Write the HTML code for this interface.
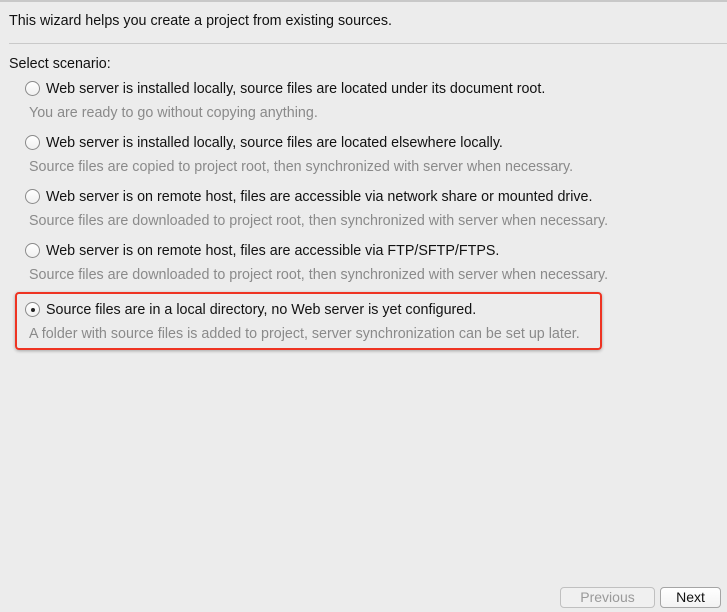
<!DOCTYPE html>
<html><head><style>
body{margin:0;width:727px;height:612px;background:#ececec;font-family:"Liberation Sans",sans-serif;font-size:14.3px;color:#111;position:relative;overflow:hidden}
.a{position:absolute;white-space:nowrap}
.top{position:absolute;left:0;top:0;width:727px;height:2px;background:#c8c8c8}
.sep{position:absolute;left:9px;top:43px;width:718px;height:1px;background:#c9c9c9}
.r{position:absolute;width:15px;height:15px;border-radius:50%;border:1px solid #8a8a8a;background:linear-gradient(#fff,#f0f0f0);box-sizing:border-box}
.d{color:#8a8a8a}
.box{position:absolute;left:15px;top:292px;width:587px;height:58px;border:2px solid #ee3322;border-radius:4px;box-sizing:border-box;box-shadow:0 1px 3px rgba(0,0,0,.3)}
.btn{position:absolute;height:21px;border:1px solid #a5a5a5;border-radius:4px;box-sizing:border-box;text-align:center;line-height:19px;font-size:14px}
</style></head><body>
<div class="top"></div>
<div class="a" style="left:9px;top:13px">This wizard helps you create a project from existing sources.</div>
<div class="sep"></div>
<div class="a" style="left:9px;top:56px">Select scenario:</div>

<div class="r" style="left:25px;top:81px"></div>
<div class="a" style="left:46px;top:81px">Web server is installed locally, source files are located under its document root.</div>
<div class="a d" style="left:29px;top:105px">You are ready to go without copying anything.</div>

<div class="r" style="left:25px;top:135px"></div>
<div class="a" style="left:46px;top:135px">Web server is installed locally, source files are located elsewhere locally.</div>
<div class="a d" style="left:29px;top:159px">Source files are copied to project root, then synchronized with server when necessary.</div>

<div class="r" style="left:25px;top:189px"></div>
<div class="a" style="left:46px;top:189px">Web server is on remote host, files are accessible via network share or mounted drive.</div>
<div class="a d" style="left:29px;top:213px">Source files are downloaded to project root, then synchronized with server when necessary.</div>

<div class="r" style="left:25px;top:243px"></div>
<div class="a" style="left:46px;top:243px">Web server is on remote host, files are accessible via FTP/SFTP/FTPS.</div>
<div class="a d" style="left:29px;top:267px">Source files are downloaded to project root, then synchronized with server when necessary.</div>

<div class="box"></div>
<div class="r" style="left:25px;top:302px"><div style="position:absolute;left:4.5px;top:4.5px;width:4px;height:4px;border-radius:50%;background:#222"></div></div>
<div class="a" style="left:46px;top:302px">Source files are in a local directory, no Web server is yet configured.</div>
<div class="a d" style="left:29px;top:326px">A folder with source files is added to project, server synchronization can be set up later.</div>

<div class="btn" style="left:560px;top:587px;width:95px;color:#9a9a9a;border-color:#c0c0c0;background:#f0f0f0">Previous</div>
<div class="btn" style="left:660px;top:587px;width:61px;background:linear-gradient(#fff,#f3f3f3);color:#111">Next</div>
</body></html>
